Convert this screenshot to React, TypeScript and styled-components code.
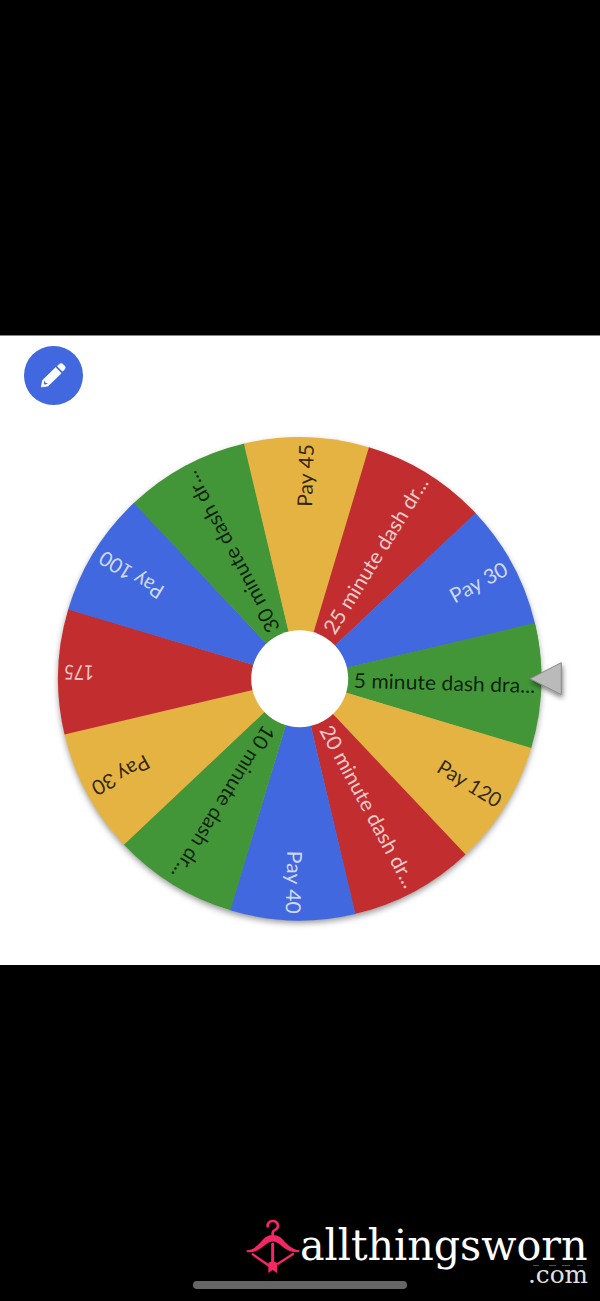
import React from 'react';
import styled, { createGlobalStyle } from 'styled-components';

const GlobalStyle = createGlobalStyle`
  * { box-sizing: border-box; }
  body { margin: 0; background: #000; }
`;

const Screen = styled.main`
  position: relative;
  display: flex;
  flex-direction: column;
  width: 600px;
  height: 1301px;
  padding-top: 335px;
  background: #000;
  overflow: hidden;
`;

const Panel = styled.section`
  display: flex;
  flex-direction: column;
  align-items: flex-start;
  height: 630px;
  padding-top: 10px;
  background: #fff;
  border-top: 1px solid #8a8585;
`;

const EditButton = styled.button`
  display: flex;
  align-items: center;
  justify-content: center;
  flex: none;
  width: 58.5px;
  height: 58.5px;
  margin-left: 24px;
  padding: 0;
  border: 0;
  border-radius: 50%;
  background: #4168de;
`;

const WheelChart = styled.svg`
  display: block;
  flex: none;
  width: 600px;
  height: 540px;
  margin-top: 15.5px;
`;

const SliceLabel = styled.text<{ $light: boolean }>`
  font-family: Lato, 'Open Sans', sans-serif;
  font-size: 20.5px;
  fill: ${(p) => (p.$light ? 'rgba(255,255,255,0.76)' : 'rgba(0,0,0,0.78)')};
`;

const Footer = styled.footer`
  display: flex;
  justify-content: flex-end;
  align-items: flex-start;
  padding: 254px 12px 0 0;
  color: #fff;
`;

const Hanger = styled.svg`
  width: 54px;
  height: 55px;
`;

const Brand = styled.svg`
  display: block;
  width: 288px;
  height: 80px;
  font-family: 'DejaVu Serif Condensed', 'DejaVu Serif', serif;
  font-stretch: condensed;
  fill: #fff;
`;

const HomeBar = styled.div`
  position: absolute;
  left: 193px;
  top: 1281px;
  width: 214px;
  height: 8px;
  border-radius: 4px;
  background: #656565;
`;

const RED = '#c22e2f';
const BLUE = '#4168de';
const GREEN = '#439638';
const GOLD = '#e5b342';

type Slice = { label: string; color: string; start: number; length: number };

const slices: Slice[] = [
  { label: '5 minute dash dra...', color: GREEN, start: 54, length: 181.5 },
  { label: 'Pay 120', color: GOLD, start: 164, length: 71 },
  { label: '20 minute dash dr...', color: RED, start: 54.5, length: 181 },
  { label: 'Pay 40', color: BLUE, start: 172, length: 63 },
  { label: '10 minute dash dr...', color: GREEN, start: 57, length: 177 },
  { label: 'Pay 30', color: GOLD, start: 172, length: 62.5 },
  { label: '175', color: RED, start: 206, length: 29.5 },
  { label: 'Pay 100', color: BLUE, start: 162, length: 71.5 },
  { label: '30 minute dash dr...', color: GREEN, start: 54, length: 180 },
  { label: 'Pay 45', color: GOLD, start: 172, length: 63 },
  { label: '25 minute dash dr...', color: RED, start: 55, length: 180 },
  { label: 'Pay 30', color: BLUE, start: 172, length: 62.5 },
];

const CX = 299.7;
const CY = 258.8;
const R = 241.7;
const HUB = 48.5;
const TILT = 1.65;

const point = (r: number, deg: number) => {
  const a = (deg * Math.PI) / 180;
  return `${(r * Math.cos(a)).toFixed(3)} ${(r * Math.sin(a)).toFixed(3)}`;
};

function Wheel() {
  return (
    <WheelChart viewBox="0 0 600 540">
      <defs>
        <filter id="wheelShadow" x="-10%" y="-10%" width="120%" height="120%">
          <feDropShadow dx="0" dy="3" stdDeviation="3" floodColor="#000" floodOpacity="0.42" />
        </filter>
        <filter id="pointerShadow" x="-30%" y="-30%" width="170%" height="170%">
          <feDropShadow dx="1" dy="3" stdDeviation="2.5" floodColor="#000" floodOpacity="0.5" />
        </filter>
      </defs>
      <g transform={`translate(${CX} ${CY})`}>
        <circle r={R - 0.5} fill="#bbb" filter="url(#wheelShadow)" />
        {slices.map((s, i) => {
          const mid = TILT + i * 30;
          return (
            <path
              key={i}
              d={`M0 0L${point(R, mid - 15)}A${R} ${R} 0 0 1 ${point(R, mid + 15.15)}Z`}
              fill={s.color}
            />
          );
        })}
        <path d={`M0 0L${point(R, TILT - 15)}A${R} ${R} 0 0 1 ${point(R, TILT)}Z`} fill={GREEN} />
        {slices.map((s, i) => (
          <SliceLabel
            key={i}
            $light={s.color === RED || s.color === BLUE}
            x={s.start}
            y={7.4}
            textLength={s.length}
            lengthAdjust="spacingAndGlyphs"
            transform={`rotate(${TILT + i * 30})`}
          >
            {s.label}
          </SliceLabel>
        ))}
        <circle r={HUB} fill="#fff" />
      </g>
      <path
        d="M530 258.7L561.3 242.7V274.7Z"
        fill="#bababa"
        stroke="#888"
        strokeWidth="1"
        filter="url(#pointerShadow)"
      />
    </WheelChart>
  );
}

export default function App() {
  return (
    <>
      <GlobalStyle />
      <Screen>
        <Panel>
          <EditButton aria-label="Edit">
            <svg width="26" height="26" viewBox="0 0 81 81">
              <path
                d="M4 78L8 57L49 17L66 35L25 75Z"
                fill="#fff"
                stroke="#fff"
                strokeWidth="2"
                strokeLinejoin="round"
              />
              <path
                d="M54 13L61 7Q66 2 71 7L77 13Q81 18 76 23L70 29Z"
                fill="#fff"
                stroke="#fff"
                strokeWidth="2"
                strokeLinejoin="round"
              />
              <path d="M14 57L17 65L25 67L15 71L12 67Z" fill="#4168de" />
            </svg>
          </EditButton>
          <Wheel />
        </Panel>
        <Footer>
          <Hanger viewBox="18 57 162 165">
            <g fill="none" stroke="#f42666" strokeLinecap="round">
              <path d="M83 79C80 59 114 57 114 78C114 91 98 88 98 98V108" strokeWidth="8" />
              <path d="M38 163L87 197M159 162L114 191" strokeWidth="7" />
              <path d="M98 132V192" strokeWidth="9" />
            </g>
            <path
              d="M20 151C48 150 61 125 76 112Q98 98 121 112C137 126 151 149 178 151V156C145 160 130 140 117 131Q98 118 80 131C67 140 51 160 20 156Z"
              fill="#f42666"
            />
            <path d="M85 188L98 183L111 188V219L98 210L85 219Z" fill="#f42666" />
          </Hanger>
          <Brand viewBox="0 0 288 80">
            <text x="0" y="41" fontSize="43" textLength="287.5" lengthAdjust="spacingAndGlyphs">
              allthingsworn
            </text>
            <text x="228" y="64" fontSize="25" textLength="60" lengthAdjust="spacingAndGlyphs" fillOpacity="0.9">
              .com
            </text>
            <path d="M233 46.5h6M249 46.5h7M262 46.5h8M277 46.5h6" stroke="#666" strokeWidth="0.8" />
          </Brand>
        </Footer>
        <HomeBar />
      </Screen>
    </>
  );
}
